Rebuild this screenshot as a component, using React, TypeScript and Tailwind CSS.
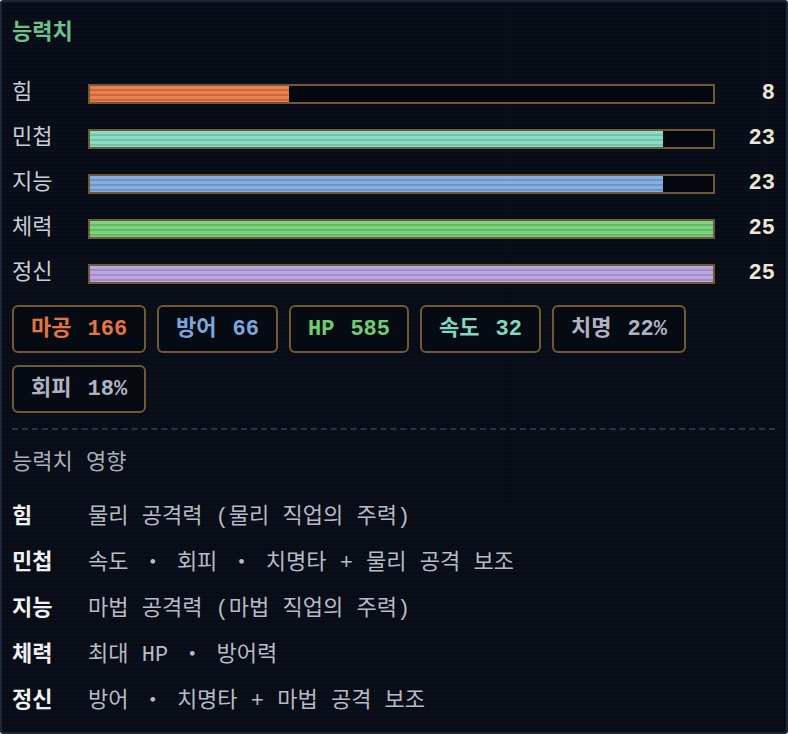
const mono = "font-['Liberation_Mono','Noto_Sans_CJK_KR',monospace]"

type Stat = { name: string; value: number; fill: string }

const MAX_STAT = 25

const stats: Stat[] = [
  { name: "힘", value: 8, fill: "bg-[#e2733f]" },
  { name: "민첩", value: 23, fill: "bg-[#7fd8bf]" },
  { name: "지능", value: 23, fill: "bg-[#79a6dc]" },
  { name: "체력", value: 25, fill: "bg-[#6dcf6f]" },
  { name: "정신", value: 25, fill: "bg-[#b69bdb]" },
]

const derived = [
  { label: "마공", value: "166", color: "text-[#e5743f]" },
  { label: "방어", value: "66", color: "text-[#7ba7dd]" },
  { label: "HP", value: "585", color: "text-[#6dcf6f]" },
  { label: "속도", value: "32", color: "text-[#7fd8bf]" },
  { label: "치명", value: "22%", color: "text-[#aeb4c2]" },
  { label: "회피", value: "18%", color: "text-[#aeb4c2]" },
]

const effects = [
  { name: "힘", text: "물리 공격력 (물리 직업의 주력)" },
  { name: "민첩", text: "속도 ・ 회피 ・ 치명타 + 물리 공격 보조" },
  { name: "지능", text: "마법 공격력 (마법 직업의 주력)" },
  { name: "체력", text: "최대 HP ・ 방어력" },
  { name: "정신", text: "방어 ・ 치명타 + 마법 공격 보조" },
]

function StatBar({ stat }: { stat: Stat }) {
  const pct = (stat.value / MAX_STAT) * 100
  return (
    <div className="flex h-[45px] items-center">
      <span className="w-[76px] text-[22px] text-[#c9cdd5]">{stat.name}</span>
      <div className="h-5 flex-1 border-2 border-[#6e5a37] bg-[#04070e]">
        <div
          className={`h-full ${stat.fill} bg-[repeating-linear-gradient(to_bottom,rgba(255,255,255,0.1)_0px,rgba(255,255,255,0.1)_3px,rgba(0,0,0,0.1)_3px,rgba(0,0,0,0.1)_5px)]`}
          style={{ width: `${pct}%` }}
        />
      </div>
      <span className="w-[60px] text-right text-[22px] font-bold text-[#ece6d6]">{stat.value}</span>
    </div>
  )
}

export default function App() {
  return (
    <div
      className={`${mono} h-[734px] w-[788px] overflow-hidden rounded-[3px] border-2 border-[#1c2739] bg-[#070c17] bg-[repeating-linear-gradient(to_bottom,rgba(255,255,255,0.012)_0px,rgba(255,255,255,0.012)_2px,transparent_2px,transparent_4px)]`}
    >
      <div className="flex flex-col px-[10px] pr-[11px]">
        <h2 className="pt-[16px] text-[22px] font-bold leading-8 text-[#70c08c]">능력치</h2>

        <div className="mt-[21px] flex flex-col">
          {stats.map((s) => (
            <StatBar key={s.name} stat={s} />
          ))}
        </div>

        <div className="mt-[9px] flex flex-wrap gap-x-[11px] gap-y-[12px] pr-[60px]">
          {derived.map((d) => (
            <div
              key={d.label}
              className={`flex h-[48px] items-center gap-[16px] rounded-[6px] border-2 border-[#715a33] bg-[#060a13] px-[17px] text-[22px] font-bold ${d.color}`}
            >
              <span>{d.label}</span>
              <span>{d.value}</span>
            </div>
          ))}
        </div>

        <div className="mt-[15px] border-t-2 border-dashed border-[#26354a]" />

        <p className="mt-[18px] text-[22px] leading-8 text-[#a9afb9]">능력치 영향</p>

        <div className="mt-[14px] flex flex-col">
          {effects.map((e) => (
            <div key={e.name} className="flex h-[46px] items-center">
              <span className="w-[76px] text-[22px] font-bold text-[#eef0f3]">{e.name}</span>
              <span className="whitespace-pre text-[22px] text-[#b6bbc5]">{e.text}</span>
            </div>
          ))}
        </div>
      </div>
    </div>
  )
}
